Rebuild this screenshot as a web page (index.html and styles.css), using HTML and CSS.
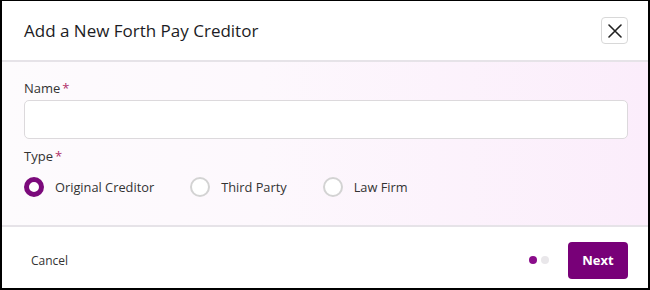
FILE: index.html
```html
<!DOCTYPE html>
<html lang="en">
<head>
    <meta charset="UTF-8">
    <meta name="viewport" content="width=device-width, initial-scale=1.0">
    <link rel="stylesheet" href="styles.css">
    <title>Add a New Forth Pay Creditor</title>
</head>
<body>
    <div class="modal">
        <div class="modal-header">
            <h1>Add a New Forth Pay Creditor</h1>
            <button class="close-btn" aria-label="Close">
                <svg width="14" height="14" viewBox="0 0 14 14">
                    <path d="M1 1 L13 13 M13 1 L1 13" stroke="#222" stroke-width="1.6" fill="none" stroke-linecap="round"/>
                </svg>
            </button>
        </div>
        <div class="modal-body">
            <label class="field-label" for="nombre">Name<span class="req">*</span></label>
            <input type="text" id="nombre" class="text-input">
            <div class="field-label">Type<span class="req">*</span></div>
            <div class="radio-group">
                <label class="radio selected"><span class="dot"></span>Original Creditor</label>
                <label class="radio"><span class="dot"></span>Third Party</label>
                <label class="radio"><span class="dot"></span>Law Firm</label>
            </div>
        </div>
        <div class="modal-footer">
            <button class="cancel-btn">Cancel</button>
            <div class="footer-right">
                <div class="steps">
                    <span class="step active"></span>
                    <span class="step"></span>
                </div>
                <button class="next-btn">Next</button>
            </div>
        </div>
    </div>
</body>
</html>
```

FILE: styles.css
```css
body {
    margin: 0;
    padding: 0;
    font-family: "Open Sans", Arial, sans-serif;
    background-color: #fff;
}

.modal {
    width: 650px;
    height: 290px;
    box-sizing: border-box;
    border: 2px solid #000;
    border-top-width: 1px;
    display: flex;
    flex-direction: column;
}

.modal-header {
    height: 59px;
    display: flex;
    justify-content: space-between;
    align-items: center;
    padding: 0 20px 0 22px;
    border-bottom: 2px solid #e6e3e8;
}

.modal-header h1 {
    margin: 0;
    font-size: 17px;
    font-weight: 500;
    color: #1c1c24;
}

.close-btn {
    width: 27px;
    height: 27px;
    padding: 0;
    border: 1px solid #d8d8d8;
    border-radius: 4px;
    background: #fff;
    display: flex;
    align-items: center;
    justify-content: center;
    cursor: pointer;
}

.modal-body {
    height: 165px;
    box-sizing: border-box;
    padding: 17px 20px 0 22px;
    background: linear-gradient(to right, #fdfbfd 0%, #fdf8fd 40%, #fbedfb 100%);
    border-bottom: 2px solid #e6e3e8;
}

.field-label {
    display: block;
    font-size: 13px;
    color: #333;
    line-height: 18px;
}

.req {
    color: #b0306a;
    margin-left: 2px;
}

.text-input {
    display: block;
    width: 100%;
    height: 39px;
    box-sizing: border-box;
    margin: 3px 0 8px;
    border: 1px solid #dcd9dc;
    border-radius: 5px;
    background: #fff;
}

.radio-group {
    display: flex;
    align-items: center;
    margin-top: 12px;
}

.radio {
    display: flex;
    align-items: center;
    font-size: 12.8px;
    color: #333;
    margin-right: 36px;
}

.radio .dot {
    width: 20px;
    height: 20px;
    box-sizing: border-box;
    border: 2px solid #d3d3d3;
    border-radius: 50%;
    background: #fff;
    margin-right: 11px;
}

.radio.selected .dot {
    border: 5px solid #7b0a7b;
}

.modal-footer {
    flex: 1;
    display: flex;
    justify-content: space-between;
    align-items: center;
    padding: 5px 20px 0 29px;
}

.cancel-btn {
    border: none;
    background: none;
    padding: 0;
    font-family: inherit;
    font-size: 12px;
    color: #333;
    cursor: pointer;
}

.footer-right {
    display: flex;
    align-items: center;
}

.steps {
    display: flex;
    margin-right: 19px;
}

.step {
    width: 8px;
    height: 8px;
    border-radius: 50%;
    background: #e9e7ea;
    margin-left: 4px;
}

.step.active {
    background: #8a0c8a;
}

.next-btn {
    width: 60px;
    height: 37px;
    border: none;
    border-radius: 4px;
    background-color: #780078;
    color: #fff;
    font-family: inherit;
    font-size: 13px;
    font-weight: 700;
    cursor: pointer;
}
```
